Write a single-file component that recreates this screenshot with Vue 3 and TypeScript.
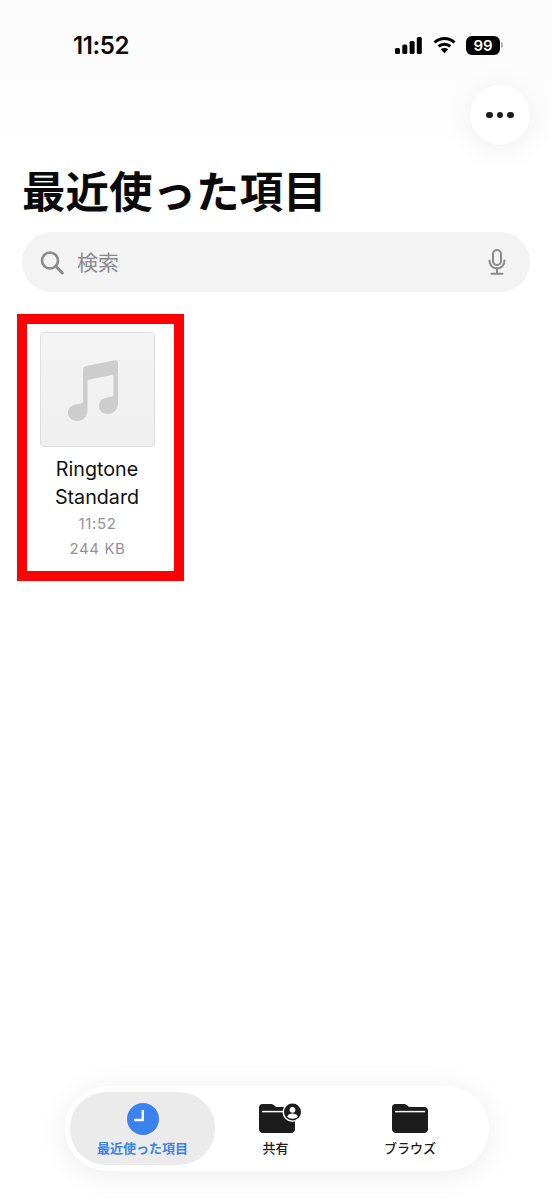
<script setup lang="ts">
interface Tab { label: string; kind: 'clock' | 'shared' | 'folder'; active?: boolean }
const tabs: Tab[] = [
  { label: '最近使った項目', kind: 'clock', active: true },
  { label: '共有', kind: 'shared' },
  { label: 'ブラウズ', kind: 'folder' },
]
</script>

<template>
  <div class="page">
    <header class="status">
      <span class="time">11:52</span>
      <div class="status-icons">
        <svg width="27" height="17" viewBox="0 0 27 17" fill="#000">
          <rect x="0" y="11" width="5" height="6" rx="1.5" />
          <rect x="7.3" y="7.5" width="5" height="9.5" rx="1.5" />
          <rect x="14.6" y="4" width="5" height="13" rx="1.5" />
          <rect x="21.8" y="0" width="5" height="17" rx="1.5" />
        </svg>
        <svg class="wifi" width="23" height="18" viewBox="0 0 23 18">
          <path d="M1.5 6.5C7 1 16 1 21.5 6.5" fill="none" stroke="#000" stroke-width="3" />
          <path d="M5.6 10.4C8.8 7.4 14.2 7.4 17.4 10.4" fill="none" stroke="#000" stroke-width="3" />
          <path d="M7.8 13.2L11.5 17.2L15.2 13.2C13 11.6 10 11.6 7.8 13.2Z" fill="#000" />
        </svg>
        <div class="battery"><span>99</span></div>
        <div class="nub"></div>
      </div>
    </header>

    <div class="toolbar">
      <button class="more" type="button" aria-label="その他">
        <i></i><i></i><i></i>
      </button>
    </div>

    <h1>最近使った項目</h1>

    <div class="search">
      <svg width="24" height="25" viewBox="0 0 24 25" fill="none" stroke="#8a8a8a" stroke-width="2.6">
        <circle cx="10" cy="10.5" r="8" />
        <path d="M16 16.5L22.3 23" stroke-linecap="round" stroke-width="3" />
      </svg>
      <span class="placeholder">検索</span>
      <svg class="mic" width="18" height="26" viewBox="0 0 18 26" fill="none" stroke="#8a8a8a" stroke-width="2">
        <rect x="5" y="1" width="8" height="15" rx="4" />
        <path d="M1.5 11.5C1.5 16 4.5 19.5 9 19.5S16.5 16 16.5 11.5" stroke-linecap="round" />
        <path d="M9 19.5V24.5M3.5 24.8H14.5" stroke-linecap="round" />
      </svg>
    </div>

    <section class="grid">
      <article class="file">
        <div class="thumb">
          <svg class="note" width="50" height="61" viewBox="0 0 50 61" fill="#cdcdcd">
            <path d="M47 0.3L18.5 6C16.3 6.4 15 7.8 15 10V41.5C15 42.6 14.4 43.2 13 43.5L9 44.3C3.5 45.4 0 47.8 0 52.5C0 57.4 3.8 61 9 61C14.8 61 19.5 56.6 19.5 50V21.5C19.5 20.2 20 19.6 21.2 19.4L43.5 15C44.8 14.8 45.5 15.4 45.5 16.6V34.5C45.5 35.8 45 36.4 43.6 36.7L39.5 37.5C34 38.5 31 41.2 31 45.8C31 50.6 34.6 54 39.6 54C45.6 54 50 49.6 50 43.5V3C50 1 49 0 47 0.3Z" />
          </svg>
        </div>
        <div class="name">Ringtone<br />Standard</div>
        <div class="meta">11:52</div>
        <div class="meta">244 KB</div>
      </article>
    </section>

    <nav class="tabbar">
      <div v-for="tab in tabs" :key="tab.label" class="tab" :class="{ active: tab.active }">
        <div class="tab-icon">
          <svg v-if="tab.kind === 'clock'" width="32" height="32" viewBox="0 0 32 32">
            <circle cx="16" cy="16" r="16" fill="#3a82ee" />
            <path d="M15.8 8V17H8" fill="none" stroke="#fff" stroke-width="2.4" stroke-linecap="round" stroke-linejoin="round" />
          </svg>
          <svg v-else class="folder" :class="{ shifted: tab.kind === 'shared' }" width="36" height="32" viewBox="0 0 36 32">
            <path d="M3.5 1H11.5C13.5 1 14.5 1.6 15.5 2.6L17 4H32C34.5 4 36 5.5 36 8V26C36 28.5 34.5 30 32 30H4C1.5 30 0 28.5 0 26V4.5C0 2.2 1.3 1 3.5 1Z" fill="#1c1c1c" />
            <path d="M3 8.6H33" stroke="#fff" stroke-width="1.5" fill="none" />
            <template v-if="tab.kind === 'shared'">
              <circle cx="33.5" cy="9" r="10" fill="#fff" />
              <circle cx="33.5" cy="9" r="8.5" fill="#1c1c1c" />
              <circle cx="33.5" cy="6.8" r="2.9" fill="#fff" />
              <path d="M28.2 13.6C29 11.4 31.2 10.6 33.5 10.6S38 11.4 38.8 13.6C37.4 15 35.6 15.8 33.5 15.8S29.6 15 28.2 13.6Z" fill="#fff" />
            </template>
          </svg>
        </div>
        <span class="tab-label">{{ tab.label }}</span>
      </div>
    </nav>
  </div>
</template>

<style scoped>
.page {
  width: 552px;
  height: 1200px;
  box-sizing: border-box;
  display: flex;
  flex-direction: column;
  overflow: hidden;
  background: linear-gradient(#fcfcfc 0, #fdfdfd 115px, #ffffff 145px);
  font-family: Inter, "Noto Sans CJK JP", sans-serif;
  color: #000;
}
.status {
  height: 85px;
  box-sizing: border-box;
  padding: 30px 49px 0 73px;
  display: flex;
  justify-content: space-between;
  align-items: flex-start;
}
.time {
  font-size: 24px;
  line-height: 32px;
  font-weight: 600;
  letter-spacing: -0.4px;
  color: #0a0a0a;
}
.status-icons {
  display: flex;
  align-items: center;
  height: 30px;
}
.wifi { margin-left: 11px; }
.battery {
  width: 34px;
  height: 19px;
  margin-left: 10px;
  border-radius: 6px;
  background: #000;
  color: #fff;
  font-size: 15px;
  font-weight: 600;
  line-height: 19px;
  text-align: center;
}
.nub {
  width: 2px;
  height: 6px;
  margin-left: 1px;
  border-radius: 0 2px 2px 0;
  background: #b8b8b8;
}
.toolbar {
  height: 60px;
  padding: 0 22px;
  display: flex;
  justify-content: flex-end;
}
.more {
  width: 60px;
  height: 60px;
  padding: 0;
  border: 0;
  border-radius: 50%;
  background: #fff;
  box-shadow: 0 4px 30px rgba(0, 0, 0, 0.07);
  display: flex;
  align-items: center;
  justify-content: center;
  gap: 4px;
}
.more i {
  width: 6.5px;
  height: 6.5px;
  border-radius: 50%;
  background: #1c1c1c;
}
h1 {
  margin: 22px 0 0 22px;
  font-size: 43.5px;
  line-height: 51px;
  font-weight: 700;
  color: #0a0a0a;
  white-space: nowrap;
}
.search {
  margin: 14px 22px 0 22px;
  height: 60px;
  box-sizing: border-box;
  padding: 0 24px 0 18px;
  border-radius: 30px;
  background: #f3f3f3;
  display: flex;
  align-items: center;
}
.placeholder {
  margin: -2px 0 0 13px;
  font-size: 21px;
  color: #8a8a8a;
}
.mic { margin-left: auto; }
.grid {
  margin: 22px 0 0 17px;
  display: flex;
}
.file {
  width: 167px;
  height: 267px;
  box-sizing: border-box;
  border: 10px solid #ff0000;
  padding-right: 6px;
  display: flex;
  flex-direction: column;
  align-items: center;
  text-align: center;
}
.thumb {
  width: 115px;
  height: 115px;
  margin-top: 8px;
  box-sizing: border-box;
  border: 1px solid #dedede;
  border-radius: 4px;
  background: linear-gradient(#f4f4f4, #efefef);
  display: flex;
  align-items: center;
  justify-content: center;
}
.note { margin: 2px 9px 0 0; }
.name {
  margin: 8px 0 0 -1px;
  font-size: 19.7px;
  line-height: 28px;
  color: #111;
}
.meta {
  font-size: 15px;
  line-height: 25px;
  color: #939393;
  letter-spacing: 0.6px;
}
.tabbar {
  margin: auto 63px 29px 65px;
  height: 85px;
  box-sizing: border-box;
  padding: 6px 5px;
  border-radius: 42px;
  background: #fff;
  box-shadow: 0 4px 30px rgba(0, 0, 0, 0.08);
  display: grid;
  grid-template-columns: 145px 121px 1fr;
}
.tab {
  height: 73px;
  box-sizing: border-box;
  padding-top: 11px;
  border-radius: 36px;
  display: flex;
  flex-direction: column;
  align-items: center;
}
.tab.active { background: #ebebeb; }
.tab-icon {
  height: 32px;
  display: flex;
  align-items: flex-start;
  justify-content: center;
}
.folder { overflow: visible; }
.folder.shifted { margin-left: 3px; }
.tab-label {
  margin-top: 4px;
  font-size: 13px;
  line-height: 19px;
  font-weight: 500;
  color: #1c1c1c;
  white-space: nowrap;
}
.tab.active .tab-label { color: #3a82ee; font-weight: 600; }
</style>
